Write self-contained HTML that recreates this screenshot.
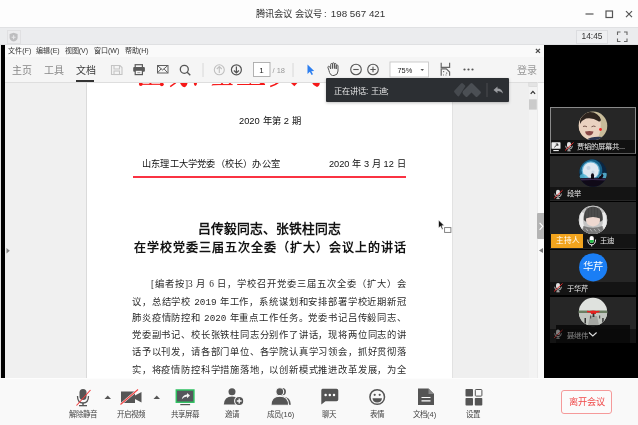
<!DOCTYPE html>
<html lang="zh-CN"><head><meta charset="utf-8">
<style>
*{box-sizing:border-box;margin:0;padding:0}
html,body{width:638px;height:425px;overflow:hidden;background:#fff;font-family:"Liberation Sans",sans-serif}
body{filter:grayscale(0.001)}
.a{position:absolute}
svg{position:absolute;overflow:visible}
#title{left:0;top:0;width:638px;height:27px;background:#fdfdfd}
#ttext{left:256px;top:7px;font-size:9.3px;color:#333;line-height:14px}
#bar2{left:0;top:27px;width:638px;height:18px;background:#ebecee;border-top:1px solid #e0e1e3;border-bottom:1px solid #dfe0e2}
#stage{left:0;top:45px;width:638px;height:333px;background:#000;border-left:1px solid #e4e4e4}
#lpanel{left:5px;top:82px;width:82px;height:296px;background:#f0f0f0;border-right:1px solid #dadada}
#page{left:87px;top:82px;width:365px;height:296px;background:#fff}
#rgray{left:452px;top:82px;width:77px;height:296px;background:#efefef;border-left:1px solid #e2e2e2}
#scroll{left:529px;top:82px;width:8px;height:296px;background:#f3f3f3}
#rstrip{left:537px;top:82px;width:7px;height:296px;background:#fafafa}
#menu{left:5px;top:45px;width:539px;height:12px;background:#fafafa}
#menu span{position:absolute;top:1px;font-size:7px;color:#333;line-height:9px;white-space:nowrap}
#tools{left:5px;top:57px;width:539px;height:26px;background:#f5f5f5;border-bottom:1px solid #dedede}
.tab{position:absolute;top:6.5px;font-size:10px;line-height:13px;color:#888}
.doc{position:absolute;font-family:"Liberation Serif",serif;color:#111;white-space:nowrap}
.ds{font-family:"Liberation Sans",sans-serif}
.pl{position:absolute;left:132px;width:274px;font-family:"Liberation Serif",serif;font-size:9.3px;line-height:12px;color:#2a2a2a;text-align:justify;text-align-last:justify;white-space:nowrap}
#bottom{left:0;top:378px;width:638px;height:47px;background:#f9f9f9;border-top:1px solid #fdfdfd}
.lbl{position:absolute;top:408.5px;font-size:7.5px;line-height:11px;color:#444;white-space:nowrap;text-align:center}
.tile{position:absolute;left:550px;width:86px;background:#262626}
.nb{position:absolute;left:0;width:86px;height:14px;background:#141414}
.nm{position:absolute;font-size:8px;line-height:10px;color:#eee;white-space:nowrap}
</style></head><body>
<div id="title" class="a"><div id="ttext" class="a">腾讯会议 会议号<span style="margin:0 1.5px 0 2.5px">:</span> <span style="font-size:9.8px">198 567 421</span></div>
<svg style="left:0;top:0" width="638" height="27">
 <line x1="585.5" y1="14" x2="593.5" y2="14" stroke="#555" stroke-width="1.2"/>
 <rect x="606" y="11" width="6.5" height="6.5" fill="none" stroke="#555" stroke-width="1.2"/>
 <path d="M626 11.2 L632 17.2 M632 11.2 L626 17.2" stroke="#555" stroke-width="1.2"/>
</svg>
</div>
<div id="bar2" class="a">
 <div class="a" style="left:7px;top:2px;width:13.5px;height:13.5px;border:1px solid #e0e0e2;background:#ececee"></div>
 <svg style="left:0;top:0" width="30" height="17">
  <path d="M13.6 4.8 L17.6 6 L17.6 9.5 Q17.6 12.6 13.6 13.6 Q9.6 12.6 9.6 9.5 L9.6 6 Z" fill="#bdbdbf"/>
  <path d="M13.6 7.2 V11.2 M11.6 9.2 H15.6" stroke="#e6e6e8" stroke-width="1.1"/>
 </svg>
 <div class="a" style="left:576px;top:2px;width:32px;height:13.5px;border:1px solid #dcdde0;background:#eeeff1;font-size:8.4px;line-height:11.5px;color:#333;text-align:center">14:45</div>
 <svg style="left:0;top:0" width="638" height="17">
  <path d="M617.5 7 V4 H620.5 M624 4 H627 V7 M627 10.5 V13.5 H624 M620.5 13.5 H617.5 V10.5" fill="none" stroke="#666" stroke-width="1.1"/>
 </svg>
</div>
<div id="stage" class="a"></div>
<div id="lpanel" class="a"></div>
<svg style="left:0;top:0" width="12" height="260"><path d="M6.5 248 L9.8 250.8 L6.5 253.6 Z" fill="#888"/></svg>
<div id="page" class="a"></div>
<div id="rgray" class="a"></div>
<div id="scroll" class="a"></div>
<div id="rstrip" class="a"></div>

<!-- document content -->
<svg style="left:0;top:0" width="460" height="100">
 <g fill="#f51818" stroke="#f51818">
  <path d="M141 84.3 H162" stroke-width="1.1"/>
  <circle cx="140.8" cy="84" r="1.9" stroke="none"/><path d="M148.5 84.5 L150.3 82.5 L152.5 84.5 Z" stroke="none"/><circle cx="161.8" cy="84.3" r="1.9" stroke="none"/>
  <path d="M170.2 86.6 L175.8 82.6" stroke-width="1.3"/>
  <path d="M179.8 82 H187.6 Q187.5 86 184.5 87.3 Q181 86.5 179.8 82 Z" stroke="none"/>
  <path d="M193.5 82 H197.3 Q197 85.5 195.3 86 Q193.8 85 193.5 82 Z" stroke="none"/>
  <path d="M211.8 85.2 L213 84.6 H232.6" stroke-width="1"/>
  <path d="M219.8 85 L222 82.5 L224.2 85 Z M227.5 85 L230 82.5 L232.6 85 Z" stroke="none"/>
  <path d="M237.2 84.5 H265" stroke-width="1"/>
  <path d="M248.5 84.8 L250.3 82.8 L252 84.8 Z M258.5 84.8 L261 82.5 L264.5 83.2 L265.2 84.8 Z" stroke="none"/>
  <path d="M270.2 86.6 Q275.5 84.8 278.4 82.3" stroke-width="1.6" fill="none"/>
  <path d="M290 82 H298.3 L294.3 86.2 Z" stroke="none"/>
  <path d="M311.5 82 H319.8 Q320 85.8 317 87 Q313 85.5 311.5 82 Z" stroke="none"/>
 </g>
</svg>
<div class="doc ds" style="left:239px;top:114.5px;font-size:9.3px;line-height:12px;word-spacing:0.5px">2020 年第 2 期</div>
<div class="doc" style="left:142px;top:157.5px;font-size:9.2px;line-height:12px;letter-spacing:0.2px">山东理工大学党委（校长）办公室</div>
<div class="doc ds" style="left:329px;top:157.5px;font-size:9.2px;line-height:12px;word-spacing:0.2px">2020 年 3 月 12 日</div>
<div class="a" style="left:133px;top:176.2px;width:273px;height:1.5px;background:#fa3242"></div>
<div class="doc" style="left:87px;width:365px;text-align:center;top:220.5px;font-size:12.8px;line-height:16px;font-weight:bold">吕传毅同志、张铁柱同志</div>
<div class="doc" style="left:87px;width:365px;text-align:center;top:239.5px;font-size:12px;letter-spacing:1px;text-indent:2px;line-height:16px;font-weight:bold">在学校党委三届五次全委（扩大）会议上的讲话</div>
<div class="pl" style="left:151px;width:255px;top:278.3px">[编者按]3 月 6 日，学校召开党委三届五次全委（扩大）会</div>
<div class="pl" style="top:295.5px">议，总结学校 <span style="font-family:'Liberation Mono',monospace">2019</span> 年工作，系统谋划和安排部署学校近期新冠</div>
<div class="pl" style="top:312.3px">肺炎疫情防控和 <span style="font-family:'Liberation Mono',monospace">2020</span> 年重点工作任务。党委书记吕传毅同志、</div>
<div class="pl" style="top:329.3px">党委副书记、校长张铁柱同志分别作了讲话，现将两位同志的讲</div>
<div class="pl" style="top:346.4px">话予以刊发，请各部门单位、各学院认真学习领会，抓好贯彻落</div>
<div class="pl" style="top:363.5px">实，将疫情防控科学措施落地，以创新模式推进改革发展，为全</div>

<!-- cursor near 440,225 -->
<svg style="left:0;top:0" width="460" height="240">
 <path d="M438.5 220 L438.5 228 L440.5 226.3 L442 229.5 L443.2 229 L441.8 225.8 L444.3 225.6 Z" fill="#111" stroke="#fff" stroke-width="0.6"/>
 <rect x="444.6" y="227.6" width="6.3" height="4.8" fill="#fff" stroke="#777" stroke-width="0.9"/>
</svg>

<!-- acrobat menu + toolbar -->
<div id="menu" class="a">
 <span style="left:3.3px">文件(F)</span><span style="left:31.3px">编辑(E)</span><span style="left:59.7px">视图(V)</span><span style="left:89px">窗口(W)</span><span style="left:119.8px">帮助(H)</span>
</div>
<svg style="left:0;top:0" width="545" height="60"><path d="M535.9 48.9 L539.9 52.9 M539.9 48.9 L535.9 52.9" stroke="#4a4a4a" stroke-width="1.3"/></svg>
<div id="tools" class="a">
 <div class="tab" style="left:7px">主页</div>
 <div class="tab" style="left:39px">工具</div>
 <div class="tab" style="left:70.5px;color:#3a3a3a">文档</div>
 <div class="a" style="left:70.5px;top:23px;width:18.5px;height:2px;background:#333"></div>
 <div class="tab" style="left:512px;color:#999">登录</div>
</div>
<svg style="left:0;top:0" width="545" height="90">
 <!-- save (disabled) -->
 <g fill="none" stroke="#c4c4c4" stroke-width="1.1">
  <path d="M111.5 65.5 H120 L122 67.5 V74.5 H111.5 Z"/>
  <path d="M114 65.5 V69 H119.5 V65.5"/>
  <rect x="114" y="71" width="5.5" height="3.5"/>
 </g>
 <!-- print -->
 <rect x="135.2" y="64.7" width="7.2" height="3" fill="#f5f5f5" stroke="#5a5a5a" stroke-width="1.2"/>
 <rect x="133.2" y="67" width="11.7" height="4.8" rx="1" fill="#5a5a5a"/>
 <rect x="135.2" y="70.2" width="7.2" height="4.4" fill="#f5f5f5" stroke="#5a5a5a" stroke-width="1.2"/>
 <rect x="137.3" y="72" width="3" height="1.2" fill="#aaa"/>
 <!-- mail -->
 <g fill="none" stroke="#606060" stroke-width="1">
  <rect x="157.5" y="65.5" width="10.5" height="7.5"/>
  <path d="M157.5 65.6 L162.6 70 L167.7 65.6 M157.5 72.8 L161.2 68.8 M167.7 72.8 L164 68.8"/>
 </g>
 <!-- search -->
 <g fill="none" stroke="#555" stroke-width="1.3">
  <circle cx="184.3" cy="69.3" r="4"/>
  <path d="M187.2 72.2 L190.3 75.3"/>
 </g>
 <line x1="203" y1="63" x2="203" y2="77" stroke="#d8d8d8" stroke-width="1"/>
 <!-- up -->
 <g fill="none" stroke="#c0c0c0" stroke-width="1.1">
  <circle cx="219.3" cy="69.8" r="5"/>
  <path d="M219.3 73 V66.5 M216.8 69 L219.3 66.5 L221.8 69"/>
 </g>
 <g fill="none" stroke="#555" stroke-width="1.2">
  <circle cx="236.4" cy="69.8" r="5"/>
  <path d="M236.4 66.5 V73 M233.9 70.5 L236.4 73 L238.9 70.5"/>
 </g>
 <rect x="253.5" y="62.5" width="16.5" height="14" fill="#fff" stroke="#aaa" stroke-width="0.9"/>
 <text x="261.5" y="72.8" font-size="8" fill="#222" text-anchor="middle" font-family="Liberation Sans">1</text>
 <text x="272.5" y="72.8" font-size="7.5" fill="#999" font-family="Liberation Sans">/ 18</text>
 <line x1="293" y1="63" x2="293" y2="77" stroke="#d8d8d8" stroke-width="1"/>
 <!-- cursor blue -->
 <path d="M307.5 64.5 L307.5 74 L309.8 71.8 L311.6 75 L313 74.3 L311.3 71.2 L314.2 71 Z" fill="#2d7ff0"/>
 <!-- hand -->
 <g fill="none" stroke="#555" stroke-width="1">
  <path d="M329 70.5 L328 67.8 Q327.5 66.5 328.6 66.3 Q329.5 66.2 330 67.3 L330.7 69 V64.5 Q330.7 63.5 331.6 63.5 Q332.5 63.5 332.5 64.5 V68.5 V63.8 Q332.5 62.8 333.5 62.8 Q334.4 62.8 334.4 63.8 V68.5 V64.5 Q334.4 63.5 335.3 63.5 Q336.2 63.5 336.2 64.5 V69 V66 Q336.2 65 337.1 65 Q338 65 338 66 V71 Q338 75 334 75.5 H332.5 Q330.5 75.3 329.5 72.5 Z"/>
 </g>
 <g fill="none" stroke="#555" stroke-width="1.1">
  <circle cx="356" cy="69.5" r="5.3"/><path d="M353.3 69.5 H358.7"/>
  <circle cx="373" cy="69.5" r="5.3"/><path d="M370.3 69.5 H375.7 M373 66.8 V72.2"/>
 </g>
 <rect x="390" y="62" width="38.5" height="15" fill="#fff" stroke="#c8c8c8" stroke-width="0.9"/>
 <text x="397.5" y="72.5" font-size="7.4" fill="#222" font-family="Liberation Sans">75%</text>
 <path d="M420.5 69 H424 L422.25 71 Z" fill="#555"/>
 <!-- fit page icon -->
 <g fill="none" stroke="#666" stroke-width="1.2">
  <path d="M441.2 62.8 V67.3 H449.6 V62.8"/>
  <path d="M441.2 75.8 V68.8 H446.3 L449.6 72 V75.8"/>
 </g>
 <g fill="#777"><rect x="443" y="71" width="1.2" height="1.2"/><rect x="446" y="72.5" width="1.2" height="1.2"/><rect x="443" y="74.5" width="1" height="1"/><rect x="445.5" y="74.5" width="1" height="1"/></g>
 <g fill="#555"><circle cx="464.5" cy="69.5" r="1.1"/><circle cx="468.5" cy="69.5" r="1.1"/><circle cx="472.5" cy="69.5" r="1.1"/></g>
</svg>

<!-- scrollbar -->
<svg style="left:0;top:0" width="545" height="120">
 <rect x="528.8" y="82.3" width="8.4" height="4.2" fill="#e4e4e4" stroke="#d4d4d4" stroke-width="0.6"/>
 <path d="M530.7 93.8 L532.9 91.4 L535.1 93.8" fill="none" stroke="#333" stroke-width="1.2"/>
 <rect x="529" y="99.3" width="7.8" height="10.3" fill="#cbcbcb"/>
 <rect x="537.2" y="82" width="0.8" height="296" fill="#e8e8e8"/>
</svg>

<!-- speaking popup -->
<div class="a" style="left:326px;top:77.5px;width:183px;height:24.5px;background:#2c2f33;border-radius:1px;box-shadow:0 1px 3px rgba(0,0,0,.25)"></div>
<div class="a" style="left:334px;top:85.5px;font-size:8.2px;line-height:11px;color:#e8e8e8;white-space:nowrap">正在讲话: 王迪;</div>
<svg style="left:0;top:0" width="545" height="110">
 <path d="M454.5 90.5 L461 83.5 Q462 82.5 463 83.5 L465.5 86 L459.5 95.5 Q458.5 97 457.5 96 L454.5 92.5 Q453.5 91.5 454.5 90.5 Z" fill="#464a4f"/>
 <path d="M463 91 L470.5 83.5 Q471.5 82.5 472.5 83.5 L480.5 91.5 Q481.5 92.5 480.5 93.5 L477.5 96.5 Q476.5 97.5 475.5 96.5 L471.5 92.5 L467.5 96.5 Q466.5 97.5 465.5 96.5 L463 94 Q462 92.5 463 91 Z" fill="#4b4f54"/>
 <line x1="487" y1="83" x2="487" y2="97" stroke="#4a4d51" stroke-width="1"/>
 <path d="M493.5 90 L497.5 86.5 V88.5 Q502 88.5 503 93.5 Q501 90.8 497.5 91 V93.3 Z" fill="#9a9ca0"/>
</svg>

<!-- collapse tab -->
<div class="a" style="left:537px;top:213px;width:7px;height:26px;background:#b4b4b4;border-radius:1px 0 0 1px"></div>
<svg style="left:0;top:0" width="545" height="260">
 <path d="M539.6 222.8 L542.8 226.3 L539.6 229.8" fill="none" stroke="#fff" stroke-width="1.1"/>
 <path d="M543 248 L539 250.5 L543 253 Z" fill="#777"/>
</svg>

<!-- video tiles -->
<div class="tile" style="left:550px;top:107px;width:86px;height:46.5px;border:1px solid #8a8a8a;border-bottom-color:#5a5a5a"></div>
<div class="tile" style="top:155.5px;height:45px"></div>
<div class="tile" style="top:202px;height:46.5px"></div>
<div class="tile" style="top:250px;height:45px"></div>
<div class="tile" style="top:296.5px;height:46.3px"></div>
<svg style="left:0;top:0" width="638" height="380">
 <defs>
  <clipPath id="c1"><circle cx="593" cy="125.8" r="14.3"/></clipPath>
  <clipPath id="c2"><circle cx="593" cy="173" r="13.8"/></clipPath>
  <clipPath id="c3"><circle cx="593" cy="220" r="14.2"/></clipPath>
  <clipPath id="c5"><circle cx="593" cy="312" r="14.2"/></clipPath>
  <radialGradient id="moon" cx="0.42" cy="0.38" r="0.62"><stop offset="0" stop-color="#f4f6fa"/><stop offset="0.42" stop-color="#d6e4f2"/><stop offset="0.55" stop-color="#3a8ab8"/><stop offset="0.8" stop-color="#14507a"/><stop offset="1" stop-color="#0a2a44"/></radialGradient>
 </defs>
 <g clip-path="url(#c1)">
  <rect x="578" y="111" width="30" height="30" fill="#c8bc9a"/>
  <path d="M578.5 125 Q578 114 589 113 Q598 113.5 600.5 121 Q601.5 130 598.5 137 Q592 142 584 139.5 Q578 134 578.5 125 Z" fill="#ead2c0"/>
  <path d="M580 121.5 Q580.5 112.5 590 112 Q598.5 112.3 601 120 Q600 122.5 598 121 Q593 117.5 586 118.5 Q582 120 580 124 Z" fill="#2e241e"/>
  <path d="M583 126.5 Q585 125.5 587 126.8 M591.5 126.8 Q593.5 125.5 595.5 126.5" fill="none" stroke="#6a4a40" stroke-width="0.9"/>
  <path d="M585 131.5 Q589.5 130.5 593.5 131.5 Q592.5 135.5 589.3 135.5 Q586 135.5 585 131.5 Z" fill="#8a4a48"/>
  <path d="M586 140 Q592 136 602 137 V142 H586 Z" fill="#2b3550"/>
  <circle cx="600.5" cy="129.5" r="1.4" fill="#f02828"/>
 </g>
 <g clip-path="url(#c2)">
  <rect x="578" y="158" width="30" height="30" fill="#0b2642"/>
  <circle cx="590.8" cy="170.5" r="11.5" fill="#1a6890" opacity="0.9"/>
  <circle cx="590.8" cy="170.5" r="9.2" fill="#62b0d4"/>
  <circle cx="590.8" cy="170.5" r="8" fill="#dfe8f2"/>
  <circle cx="588.5" cy="168" r="2" fill="#c4d2e2"/><circle cx="593" cy="172" r="1.6" fill="#c8d6e6"/>
  <path d="M579 176.5 Q582 172.5 586 175 L589 178 L579 178.5 Z M598 177 Q603 171 607 173.5 V178.5 L599 178.5 Z" fill="#5ab8d8" opacity="0.85"/>
  <path d="M578 178.5 Q592 176.8 608 178.5 V188 H578 Z" fill="#100a18"/>
  <path d="M578 179 Q592 177.5 608 179 V180.5 Q592 179.5 578 180.5 Z" fill="#3a2a50"/>
  <path d="M591 179 V175.3 Q591 173.3 592.5 173.3 Q594 173.3 594 175.3 V179 Z" fill="#100a18"/>
  <path d="M598 179 Q599 176 601 175.5 L602 173 L603.5 175.5 Q603 178 601 179 Z" fill="#100a18"/>
 </g>
 <circle cx="593" cy="220" r="14.2" fill="#d6d6d6"/>
 <g clip-path="url(#c3)">
  <rect x="578" y="205" width="30" height="30" fill="#c4c4c4"/>
  <path d="M581 212 Q578 222 581 230 L584 226 Q582 219 584 213 Z M605 212 Q608 222 605 230 L602 226 Q604 219 602 213 Z" fill="#ececec"/>
  <path d="M583.8 220 Q583.3 207 593 206.7 Q603.2 207 602.7 220 L601 221.5 H585.5 Z" fill="#444"/>
  <path d="M587 207.5 V218 M590 207 V218 M593 206.8 V218 M596 207 V218 M599 207.5 V218" stroke="#5a5a5a" stroke-width="0.7"/>
  <path d="M586 218.5 Q593 215.5 600 218.5 Q601 225 593 226.5 Q585 225 586 218.5 Z" fill="#eed8d0"/>
  <path d="M583.5 226 Q593 229.5 602.5 226 L604 236 H582 Z" fill="#7a7a7a"/>
  <path d="M586 228.5 L588 231 M590 229 L592 231.5 M594 229 L596 231.5 M598 228.5 L600 231" stroke="#c8c8c8" stroke-width="0.8"/>
 </g>
 <circle cx="593.2" cy="267.3" r="14.1" fill="#1a7ef5"/>
 <g clip-path="url(#c5)">
  <rect x="578" y="297" width="30" height="30" fill="#dfe2de"/>
  <rect x="578" y="310.5" width="30" height="2.5" fill="#6a7e62"/>
  <rect x="578" y="313" width="30" height="14" fill="#c2c6c0"/>
  <path d="M587.5 327 L590 316 H597 L599.5 327 Z" fill="#a4a6a2"/>
  <path d="M589.5 311 Q593 309.8 596.5 311 L599.5 310.8 V312.2 L596 312.8 V314 H591 V312.8 L587 312.2 V310.8 Z" fill="#e82020"/>
  <rect x="592.6" y="313.5" width="1.8" height="3.5" fill="#333"/>
  <rect x="584.5" y="318" width="1.5" height="5.5" fill="#333"/><rect x="590" y="315.5" width="1.2" height="3" fill="#555"/>
  <rect x="599" y="315.5" width="1.2" height="3" fill="#555"/><rect x="602.2" y="318" width="1.5" height="5.5" fill="#333"/>
 </g>
</svg>
<div class="nb" style="left:551px;top:140px;width:84px;height:13px;background:#111"></div>
<div class="nb" style="left:550px;top:187.3px;height:13.2px"></div>
<div class="nb" style="left:550px;top:233.8px;height:14.7px"></div>
<div class="nb" style="left:550px;top:281.8px;height:13.2px"></div>
<div class="nb" style="left:550px;top:328.8px;height:14px"></div>
<div class="a" style="left:556.4px;top:324.5px;width:74px;height:18.3px;background:rgba(8,8,8,.85)"></div>
<div class="a" style="left:551px;top:233.8px;width:32.2px;height:14.5px;background:#f2a41e"></div>
<div class="nm" style="left:555.5px;top:236px;font-size:7.6px;color:#fff;letter-spacing:0.3px">主持人</div>
<div class="nm" style="left:577px;top:142px;font-size:7.3px;color:#e6e6e6">贾韬的屏幕共...</div>
<div class="nm" style="left:566.5px;top:189px;font-size:7.3px;color:#e6e6e6">段举</div>
<div class="nm" style="left:599.5px;top:236px;font-size:7.3px;color:#e6e6e6">王迪</div>
<div class="nm" style="left:566.5px;top:283.5px;font-size:7.3px;color:#e6e6e6">于华芹</div>
<div class="nm" style="left:566.5px;top:330.5px;font-size:7.3px;color:#8a8a8a">聂继伟</div>
<div class="nm" style="left:583px;top:261px;font-size:10.3px;line-height:12px;color:#fff">华芹</div>
<svg style="left:0;top:0" width="638" height="380">
 <rect x="551.5" y="142.3" width="9" height="6.5" rx="0.6" fill="#eee"/>
 <path d="M554.3 147.3 L557.6 144.2 M555.8 144 H557.8 V146" fill="none" stroke="#222" stroke-width="0.9"/>
 <rect x="553.3" y="150" width="5.5" height="1.1" fill="#eee"/>
 <g>
  <rect x="567" y="142" width="4" height="5.8" rx="2" fill="#e0e0e0"/>
  <path d="M565.6 145.8 Q565.6 149.2 569 149.2 Q572.4 149.2 572.4 145.8 M569 149.2 V150.8 M567.3 150.8 H570.7" fill="none" stroke="#e0e0e0" stroke-width="0.8"/>
  <path d="M565 150.5 L573.5 142.5" stroke="#e02a2a" stroke-width="1"/>
 </g>
 <g transform="translate(-11 47.8)">
  <rect x="567" y="142" width="4" height="5.8" rx="2" fill="#e0e0e0"/>
  <path d="M565.6 145.8 Q565.6 149.2 569 149.2 Q572.4 149.2 572.4 145.8 M569 149.2 V150.8 M567.3 150.8 H570.7" fill="none" stroke="#e0e0e0" stroke-width="0.8"/>
  <path d="M565 150.5 L573.5 142.5" stroke="#e02a2a" stroke-width="1"/>
 </g>
 <g transform="translate(-11 141)">
  <rect x="567" y="142" width="4" height="5.8" rx="2" fill="#e0e0e0"/>
  <path d="M565.6 145.8 Q565.6 149.2 569 149.2 Q572.4 149.2 572.4 145.8 M569 149.2 V150.8 M567.3 150.8 H570.7" fill="none" stroke="#e0e0e0" stroke-width="0.8"/>
  <path d="M565 150.5 L573.5 142.5" stroke="#e02a2a" stroke-width="1"/>
 </g>
 <g transform="translate(-11 187.5)" opacity="0.55">
  <rect x="567" y="142" width="4" height="5.8" rx="2" fill="#e0e0e0"/>
  <path d="M565.6 145.8 Q565.6 149.2 569 149.2 Q572.4 149.2 572.4 145.8 M569 149.2 V150.8 M567.3 150.8 H570.7" fill="none" stroke="#e0e0e0" stroke-width="0.8"/>
  <path d="M565 150.5 L573.5 142.5" stroke="#e02a2a" stroke-width="1"/>
 </g>
 <rect x="589.6" y="236" width="4.2" height="7" rx="2.1" fill="#fff"/>
 <path d="M589.6 240 H593.8 V241 Q593.8 243 591.7 243 Q589.6 243 589.6 241 Z" fill="#27c04a"/>
 <path d="M587.8 239.5 Q587.8 244.8 591.7 244.8 Q595.6 244.8 595.6 239.5 M591.7 244.8 V246.5" fill="none" stroke="#fff" stroke-width="0.9"/>
 <path d="M589 332.5 L592.8 336 L596.6 332.5" fill="none" stroke="#ddd" stroke-width="1.1"/>
</svg>

<!-- bottom toolbar -->
<div id="bottom" class="a"></div>
<svg style="left:0;top:0" width="638" height="425">
 <!-- mic -->
 <g fill="#555">
  <rect x="79.5" y="389" width="7" height="11" rx="3.5"/>
  <path d="M77.5 396 Q77.5 403 83 403 Q88.5 403 88.5 396" fill="none" stroke="#555" stroke-width="1.3"/>
  <rect x="82.3" y="403" width="1.4" height="2.5"/>
  <rect x="79" y="405" width="8" height="1.3"/>
 </g>
 <path d="M76.5 405.5 L90.5 390" stroke="#f04040" stroke-width="1.1"/>
 <path d="M104.5 399 L107.75 395.5 L111 399 Z" fill="#555"/>
 <!-- video -->
 <path d="M121 391.5 H135 V403 H121 Z M135 395.5 L141.5 392 V402.5 L135 399 Z" fill="#555"/>
 <path d="M120.5 404.5 L138 389.5" stroke="#fbfbfb" stroke-width="2.2"/>
 <path d="M120.5 404.5 L138 389.5" stroke="#f04040" stroke-width="1.1"/>
 <path d="M153.5 399 L156.75 395.5 L160 399 Z" fill="#555"/>
 <!-- share -->
 <rect x="176.3" y="390" width="17.6" height="12.2" fill="#55565c" stroke="#2ec060" stroke-width="1.5"/>
 <path d="M181.8 399.3 Q182.5 395 187 394.6 V393 L190 395.6 L187 398.2 V396.6 Q184 396.6 181.8 399.3 Z" fill="#f4f4f4"/>
 <rect x="180.3" y="404" width="9.8" height="1.2" fill="#555"/>
 <!-- invite -->
 <g fill="#555">
  <circle cx="232" cy="391.8" r="3.5"/>
  <path d="M223.8 404.6 Q224.2 396.4 232 396.4 Q239.8 396.4 240.2 404.6 Z"/>
 </g>
 <circle cx="239.2" cy="401" r="4.6" fill="#555" stroke="#f9f9f9" stroke-width="1.1"/>
 <path d="M239.2 398.6 V403.4 M236.8 401 H241.6" stroke="#f9f9f9" stroke-width="1.3"/>
 <!-- members -->
 <g fill="#555">
  <circle cx="282.3" cy="391.7" r="3.6"/>
  <path d="M276 404.7 Q276.5 396.6 282.5 396.6 Q290.8 397 290.8 404.7 Z"/>
 </g>
 <g fill="#555" stroke="#f9f9f9" stroke-width="1.1">
  <circle cx="279.8" cy="391.7" r="3.9"/>
  <path d="M271 405.2 Q271 396.2 279.8 396.2 Q288.6 396.2 288.6 405.2 Z"/>
 </g>
 <!-- chat -->
 <path d="M322.5 388.7 H336.5 Q338.3 388.7 338.3 390.5 V399.5 Q338.3 401.3 336.5 401.3 H325.5 L321.3 404.6 V390.5 Q321.3 388.7 322.5 388.7 Z" fill="#555"/>
 <g fill="#fff"><circle cx="325.6" cy="395" r="1.25"/><circle cx="329.8" cy="395" r="1.25"/><circle cx="334" cy="395" r="1.25"/></g>
 <!-- emoji -->
 <circle cx="377.2" cy="397" r="7.3" fill="none" stroke="#555" stroke-width="1.5"/>
 <circle cx="374.7" cy="394.8" r="1.1" fill="#555"/><circle cx="379.7" cy="394.8" r="1.1" fill="#555"/>
 <path d="M372.5 398.2 H382 Q381.5 402.5 377.2 402.5 Q373 402.5 372.5 398.2 Z" fill="#555"/>
 <!-- doc -->
 <path d="M418 388.5 H428.5 L434 394 V405 H418 Z" fill="#555"/>
 <path d="M428.5 388.5 V394 H434" fill="#888"/>
 <path d="M421.5 397.5 H430.5 M421.5 400.8 H430.5" stroke="#fff" stroke-width="1.2"/>
 <!-- settings -->
 <rect x="465.5" y="389" width="7.5" height="7.5" rx="0.8" fill="#555"/>
 <rect x="475.3" y="389.5" width="6.6" height="6.6" rx="0.8" fill="none" stroke="#555" stroke-width="1"/>
 <rect x="465.5" y="398" width="7.5" height="7.5" rx="0.8" fill="#555"/>
 <rect x="474.8" y="398" width="7.5" height="7.5" rx="0.8" fill="#555"/>
</svg>
<div class="lbl" style="left:68.5px">解除静音</div>
<div class="lbl" style="left:117px">开启视频</div>
<div class="lbl" style="left:171px">共享屏幕</div>
<div class="lbl" style="left:225px">邀请</div>
<div class="lbl" style="left:267px">成员(16)</div>
<div class="lbl" style="left:322px">聊天</div>
<div class="lbl" style="left:369.5px">表情</div>
<div class="lbl" style="left:413px">文档(4)</div>
<div class="lbl" style="left:466px">设置</div>
<div class="a" style="left:561px;top:390px;width:51px;height:24px;border:1px solid #f59a9a;border-radius:3px;background:#fbfbfb;color:#f04a4a;font-size:9.2px;line-height:22px;text-align:center">离开会议</div>

</body></html>
